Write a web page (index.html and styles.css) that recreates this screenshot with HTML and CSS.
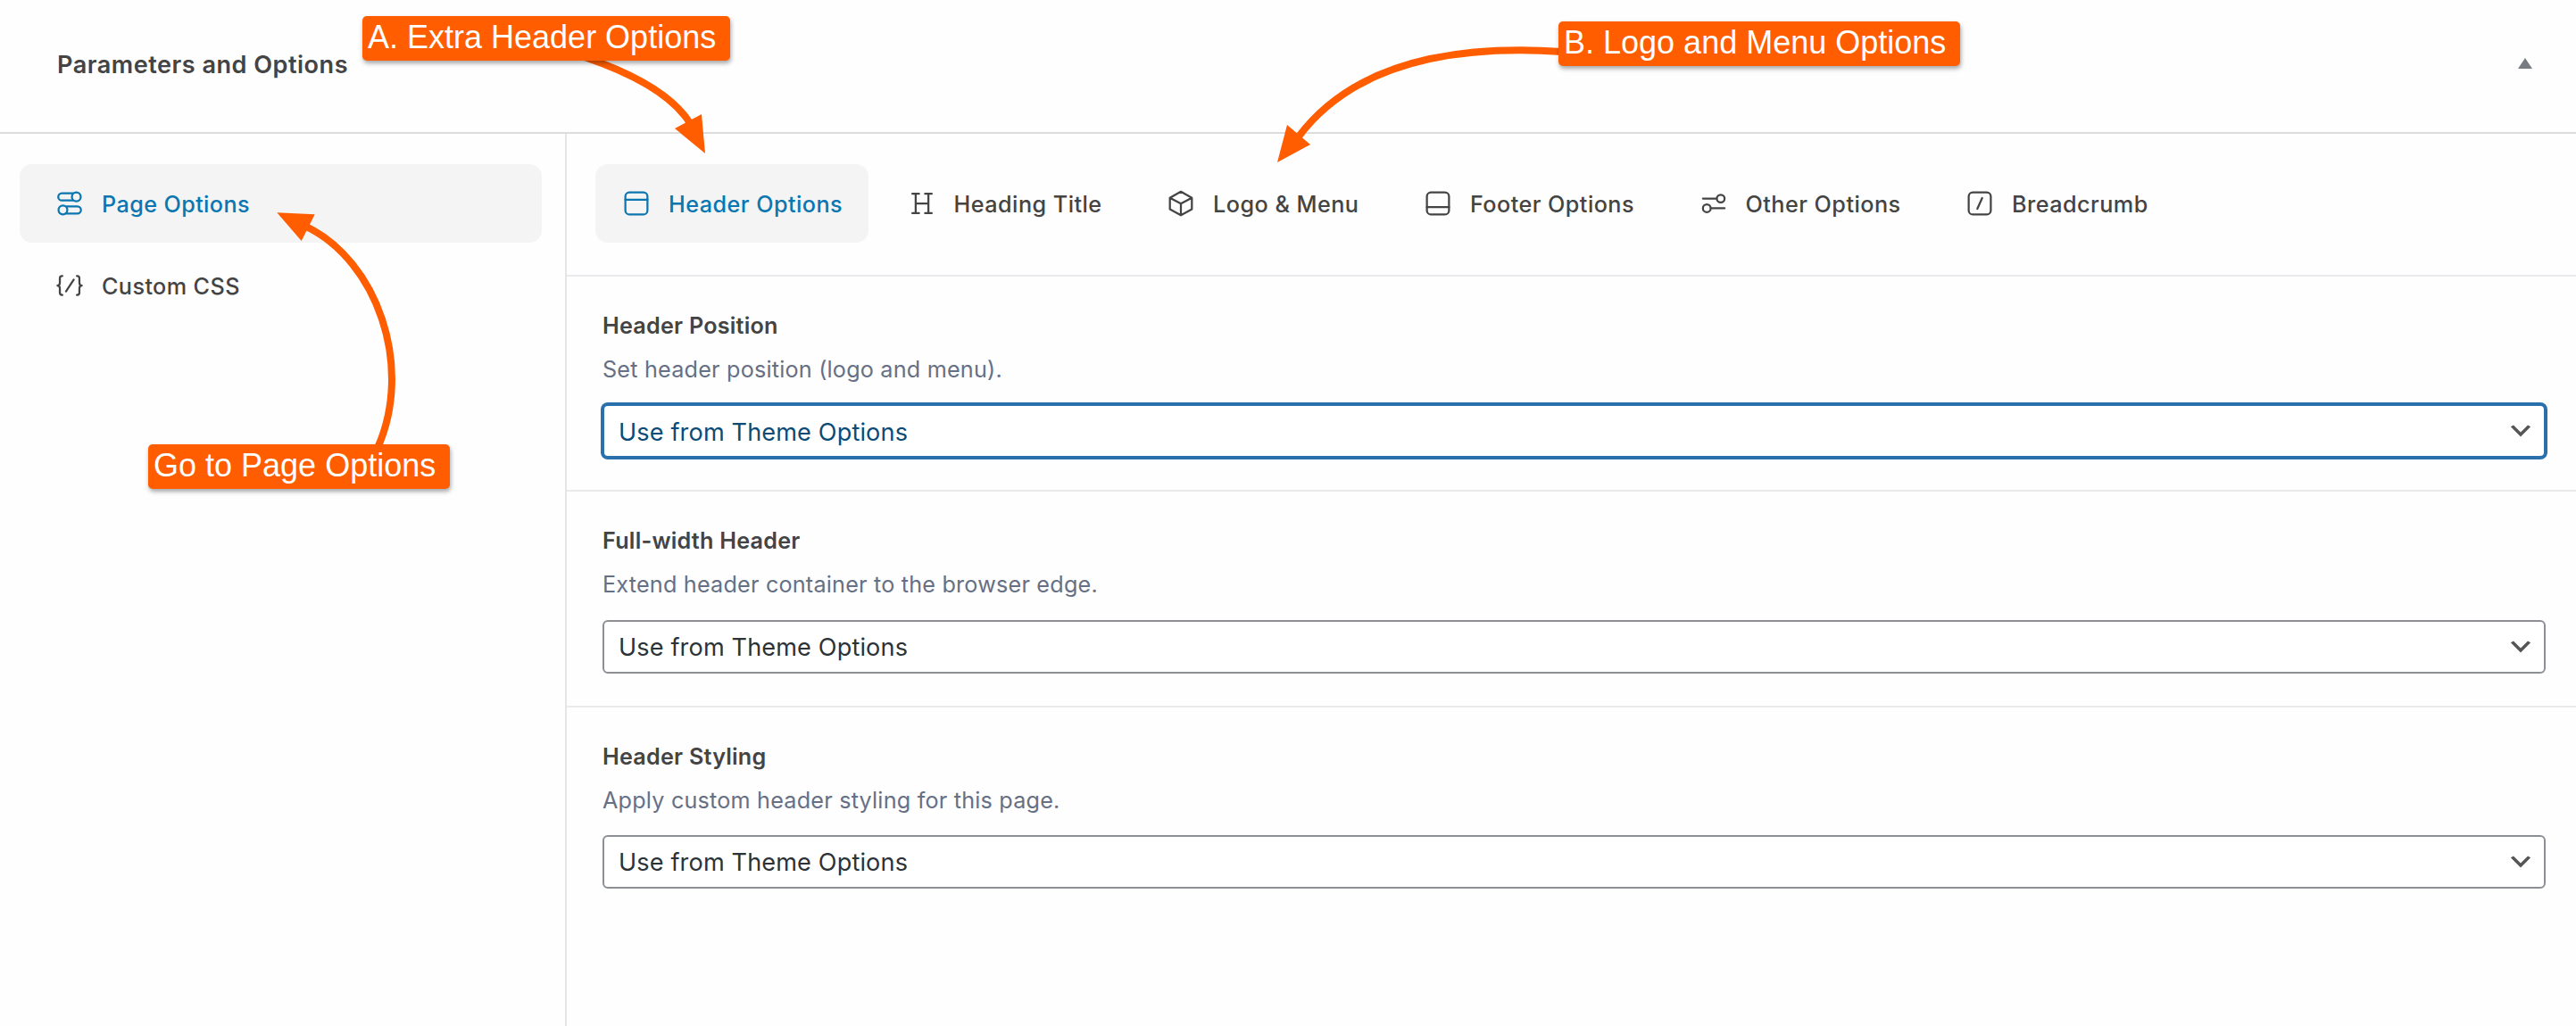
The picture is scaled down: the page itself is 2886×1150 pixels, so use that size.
FILE: index.html
```html
<!DOCTYPE html>
<html lang="en">
<head>
<meta charset="utf-8">
<title>Parameters and Options</title>
<link rel="stylesheet" href="styles.css">
</head>
<body>
<div class="metabox">
  <header class="metabox-header">
    <h2 class="metabox-title">Parameters and Options</h2>
    <svg class="toggle" viewBox="0 0 16 12" aria-hidden="true"><path d="M8 0l8 12H0z"/></svg>
  </header>
  <div class="metabox-body">
    <nav class="sidebar">
      <a class="side-item is-active">
        <svg class="icon" viewBox="0 0 24 24"><path d="M14.3 4.4H6.2a2.7 2.7 0 0 0 0 5.4h8.1M9.7 14.2h8.1a2.7 2.7 0 0 1 0 5.4H9.7"/><circle cx="17" cy="7.1" r="3.3"/><circle cx="7" cy="16.9" r="3.3"/></svg>
        <span>Page Options</span>
      </a>
      <a class="side-item">
        <svg class="icon" viewBox="0 0 24 24"><path d="M6.6 4.9h-.3c-1 0-1.6.7-1.6 1.7v3.2c0 1.2-.6 2.2-1.8 2.2 1.2 0 1.8 1 1.8 2.2v3.2c0 1 .6 1.7 1.6 1.7h.3M17.4 4.9h.3c1 0 1.6.7 1.6 1.7v3.2c0 1.2.6 2.2 1.8 2.2-1.2 0-1.8 1-1.8 2.2v3.2c0 1-.6 1.7-1.6 1.7h-.3M15.1 7.6L9.3 16.4"/></svg>
        <span>Custom CSS</span>
      </a>
    </nav>
    <main class="content">
      <nav class="tabs">
        <a class="tab is-active">
          <svg class="icon" viewBox="0 0 24 24"><rect x="3.75" y="3.75" width="16.5" height="16.5" rx="3"/><path d="M3.75 9.2h16.5"/></svg>
          <span>Header Options</span>
        </a>
        <a class="tab">
          <svg class="icon" viewBox="0 0 24 24"><path d="M4.75 4.75h5M14.25 4.75h5M4.75 19.25h5M14.25 19.25h5M7.25 4.75v14.5M16.75 4.75v14.5M7.25 12h9.5"/></svg>
          <span>Heading Title</span>
        </a>
        <a class="tab">
          <svg class="icon" viewBox="0 0 24 24"><path d="M12 3.2l8.2 4.6v8.6L12 20.9l-8.2-4.5V7.8zM3.8 7.8L12 12.2l8.2-4.4M12 12.2v8.7"/></svg>
          <span>Logo &amp; Menu</span>
        </a>
        <a class="tab">
          <svg class="icon" viewBox="0 0 24 24"><rect x="3.75" y="3.75" width="16.5" height="16.5" rx="3"/><path d="M3.75 14.8h16.5"/></svg>
          <span>Footer Options</span>
        </a>
        <a class="tab">
          <svg class="icon" viewBox="0 0 24 24"><path d="M3.9 8.4h10.2M20.1 15.6H9.9"/><circle cx="17.2" cy="8.4" r="2.9"/><circle cx="6.8" cy="15.6" r="2.9"/></svg>
          <span>Other Options</span>
        </a>
        <a class="tab">
          <svg class="icon" viewBox="0 0 24 24"><rect x="3.75" y="3.75" width="16.5" height="16.5" rx="3"/><path d="M13.8 8L10.2 16"/></svg>
          <span>Breadcrumb</span>
        </a>
      </nav>
      <section class="field">
        <h3 class="field-title">Header Position</h3>
        <p class="field-desc">Set header position (logo and menu).</p>
        <div class="select is-focused">
          <span>Use from Theme Options</span>
          <svg class="chevron" viewBox="0 0 20 20"><path d="M5 6l5 5 5-5 2 1-7 7-7-7 2-1z"/></svg>
        </div>
      </section>
      <section class="field">
        <h3 class="field-title">Full-width Header</h3>
        <p class="field-desc">Extend header container to the browser edge.</p>
        <div class="select">
          <span>Use from Theme Options</span>
          <svg class="chevron" viewBox="0 0 20 20"><path d="M5 6l5 5 5-5 2 1-7 7-7-7 2-1z"/></svg>
        </div>
      </section>
      <section class="field">
        <h3 class="field-title">Header Styling</h3>
        <p class="field-desc">Apply custom header styling for this page.</p>
        <div class="select">
          <span>Use from Theme Options</span>
          <svg class="chevron" viewBox="0 0 20 20"><path d="M5 6l5 5 5-5 2 1-7 7-7-7 2-1z"/></svg>
        </div>
      </section>
    </main>
  </div>

  <svg class="arrows" viewBox="0 0 2886 1150" aria-hidden="true">
    <path class="shaft" d="M655 64Q746 95 773 138"/>
    <path class="head" d="M786 128L756 144L790 172z"/>
    <path class="shaft" d="M1750 58C1600 48 1507 84 1455 153"/>
    <path class="head" d="M1442 140L1468 162L1431 182z"/>
    <path class="shaft" d="M423 502C464 410 422 292 343 254"/>
    <path class="head" d="M310.3 238.3L352.7 240.3L337.7 270z"/>
  </svg>
  <div class="callout callout-a">A. Extra Header Options</div>
  <div class="callout callout-b">B. Logo and Menu Options</div>
  <div class="callout callout-go">Go to Page Options</div>
</div>
</body>
</html>
```
FILE: styles.css
```css
* { box-sizing: border-box; }

body {
  margin: 0;
  background: #fefefe;
  color: #444;
  font-family: Inter, "Liberation Sans", sans-serif;
  font-size: 25.2px;
}

h2, h3, p { margin: 0; }

.metabox {
  position: relative;
  display: flex;
  flex-direction: column;
  height: 1150px;
  overflow: hidden;
}

.metabox-header {
  display: flex;
  align-items: center;
  justify-content: space-between;
  height: 150px;
  padding: 0 49px 4px 64px;
  border-bottom: 2px solid #dcdcde;
}

.metabox-title {
  font-size: 27.1px;
  font-weight: 600;
  letter-spacing: 0.49px;
}

.toggle {
  width: 16px;
  height: 12px;
  margin-bottom: 2px;
  fill: #787c82;
}

.metabox-body {
  display: flex;
  flex: 1;
}

.sidebar {
  display: flex;
  flex-direction: column;
  gap: 4px;
  width: 635px;
  padding: 34px 26px 0 22px;
  border-right: 2px solid #e5e5e5;
}

.side-item,
.tab {
  display: flex;
  align-items: center;
  gap: 18px;
  height: 88px;
  border-radius: 14px;
  font-weight: 500;
  letter-spacing: 0.46px;
  white-space: nowrap;
}

.side-item span,
.tab span { padding-top: 2px; }

.side-item { padding-left: 38px; letter-spacing: 0.4px; }

.tab { padding: 0 28.5px 0 28px; }

.is-active {
  background: #f4f4f4;
  color: #0b76b0;
}

.icon {
  width: 36px;
  height: 36px;
  fill: none;
  stroke: currentColor;
  stroke-width: 1.5;
  stroke-linecap: round;
  stroke-linejoin: round;
}

.content { flex: 1; }

.tabs {
  display: flex;
  gap: 14px;
  height: 160px;
  padding: 34px 32px 0;
  border-bottom: 2px solid #e9eaed;
}

.field {
  height: 241.4px;
  padding: 37px 34px 0 40px;
  border-bottom: 2px solid #e9eaeb;
}

.field:last-child { border-bottom: 0; }

.field-title {
  font-size: 25.2px;
  font-weight: 600;
  line-height: 36px;
  letter-spacing: 0.22px;
}

.field-desc {
  margin-top: 13px;
  color: #667085;
  line-height: 36px;
  letter-spacing: 0.2px;
}

.select {
  display: flex;
  align-items: center;
  justify-content: space-between;
  height: 60px;
  margin-top: 21.2px;
  padding: 0 10px 0 16px;
  border: 2px solid #8c8f94;
  border-radius: 6px;
  background: #fff;
  color: #2c3338;
  font-size: 27.1px;
  letter-spacing: 0.14px;
}

.select span { padding-top: 2px; }

.select.is-focused {
  border-color: #2a70ad;
  box-shadow: 0 0 0 2px #2a70ad;
  color: #0a4b78;
}

.chevron {
  width: 32px;
  height: 32px;
  fill: #555;
}

.arrows {
  position: absolute;
  inset: 0;
  width: 2886px;
  height: 1150px;
}

.shaft {
  fill: none;
  stroke: #ff5d00;
  stroke-width: 8;
}

.head { fill: #ff5d00; }

.callout {
  position: absolute;
  height: 50px;
  padding-left: 6px;
  border-radius: 5px;
  background: #ff5d00;
  box-shadow: 1px 3px 5px rgba(0, 0, 0, 0.35);
  color: #fff;
  font: 36px/47px "Liberation Sans", Arial, sans-serif;
  white-space: nowrap;
}

.callout-a { top: 18px; left: 406px; width: 412px; }
.callout-b { top: 24px; left: 1746px; width: 450px; }
.callout-go { top: 498px; left: 166px; width: 338px; }
```
